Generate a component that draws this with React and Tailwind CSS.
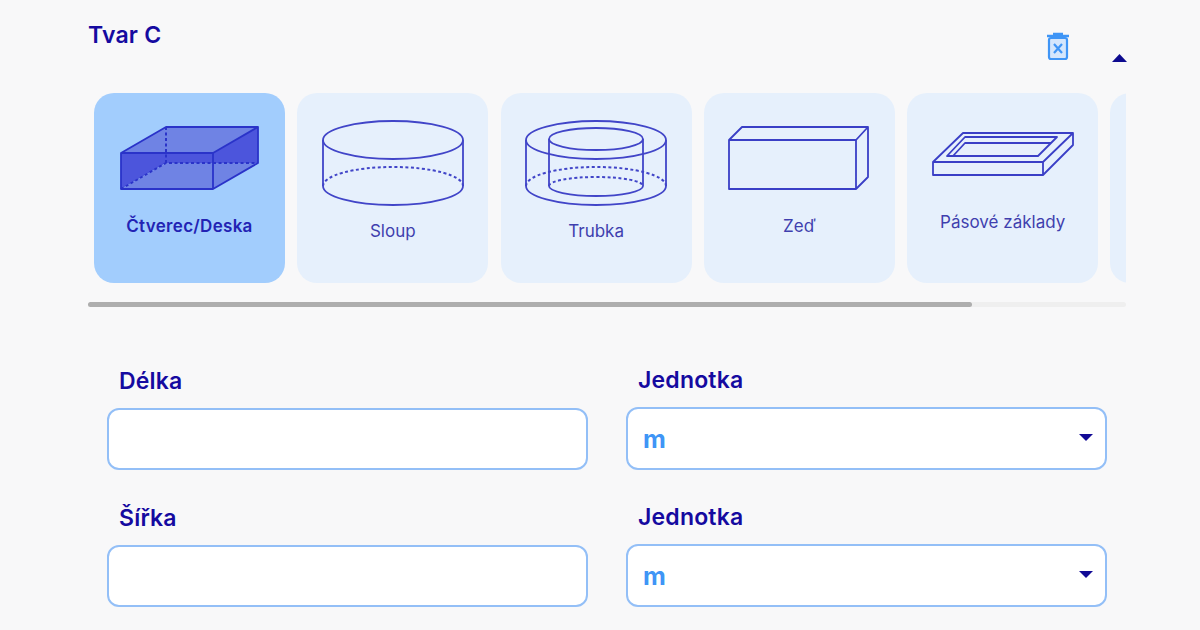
function BoxIcon() {
  return (
    <svg width="141" height="66" viewBox="119 125 141 66" fill="none" stroke="#2a33c9" strokeWidth="1.8" strokeLinejoin="round">
      <polygon points="121,153 166,127 258,127 213,153" fill="#6f83e4" stroke="none" />
      <polygon points="121,153 213,153 213,163 166,163 121,189" fill="#4c55dc" stroke="none" />
      <polygon points="121,189 166,163 213,163 213,189" fill="#6f83e4" stroke="none" />
      <polygon points="213,153 258,127 258,163 213,163" fill="#4c55dc" stroke="none" />
      <polygon points="213,163 258,163 213,189" fill="#6f83e4" stroke="none" />
      <path d="M121 153L166 127H258V163L213 189H121ZM121 153H213V189M213 153L258 127" />
      <path d="M166 127V163M121 189L166 163H258" strokeDasharray="3 2.5" strokeWidth="2" />
    </svg>
  );
}

function CylinderIcon() {
  return (
    <svg width="142" height="87" viewBox="322 120 142 87" fill="none" stroke="#4145c8" strokeWidth="1.8">
      <ellipse cx="393" cy="140" rx="70" ry="19" />
      <path d="M323 140V186C323 196.500 354 205 393 205C432 205 463 196.500 463 186V140" />
      <path d="M323 186C323 175.500 354 167 393 167C432 167 463 175.500 463 186" strokeDasharray="3 2.500" strokeWidth="2" />
    </svg>
  );
}

function TubeIcon() {
  return (
    <svg width="142" height="87" viewBox="525 120 142 87" fill="none" stroke="#4145c8" strokeWidth="1.8">
      <ellipse cx="596" cy="140" rx="70" ry="19" />
      <ellipse cx="596" cy="139" rx="47" ry="11" />
      <path d="M526 140V186C526 196.500 557 205 596 205C635 205 666 196.500 666 186V140" />
      <path d="M549 139V186C549 191.500 570 196 596 196C622 196 643 191.500 643 186V139" />
      <path d="M526 186C526 175.500 557 167 596 167C635 167 666 175.500 666 186" strokeDasharray="3 2.500" strokeWidth="2" />
      <path d="M549 186C549 181 570 177 596 177C622 177 643 181 643 186" strokeDasharray="3 2.500" strokeWidth="2" />
    </svg>
  );
}

function WallIcon() {
  return (
    <svg width="142" height="65" viewBox="729 126 142 65" fill="none" stroke="#3a3fc6" strokeWidth="1.8" strokeLinejoin="round">
      <path d="M730 140H857V189H730ZM730 140L743 127H869V177L857 189M857 140L869 127" />
    </svg>
  );
}

function StripIcon() {
  return (
    <svg width="142" height="44" viewBox="932 132 142 44" fill="none" stroke="#3a3fc6" strokeWidth="1.8" strokeLinejoin="round">
      <path d="M933 162L963 133H1073V145L1043 175H933ZM933 162H1043V175M1043 162L1073 133" />
      <path d="M947 156L965 137H1057L1038 156ZM953 156L965 143H1051" />
    </svg>
  );
}

function ShapeCard({ label, active, className, labelClass, children }) {
  return (
    <div
      className={`flex h-[190px] w-[191px] shrink-0 flex-col items-center rounded-[20px] ${
        active ? "bg-[#a2cdfd]" : "bg-[#e6f0fc]"
      } ${className}`}
    >
      {children}
      <span
        className={`whitespace-nowrap font-['Inter',sans-serif] text-[17px] leading-5 ${
          active ? "font-semibold tracking-[0.3px] text-[#2323b4]" : "text-[#3f3fae]"
        } ${labelClass}`}
      >
        {label}
      </span>
    </div>
  );
}

function Field({ label, children }) {
  return (
    <div className="flex flex-col">
      <label className="mb-[13px] pl-3 font-['Inter',sans-serif] text-[23px] font-semibold leading-7 tracking-[0.2px] text-[#150aa0]">
        {label}
      </label>
      {children}
    </div>
  );
}

function TextInput() {
  return (
    <input
      type="text"
      className="h-[62px] w-full rounded-xl border-2 border-[#93bff7] bg-white px-3 outline-none"
    />
  );
}

function UnitSelect() {
  return (
    <div className="flex h-[63px] w-full items-center justify-between rounded-xl border-2 border-[#93bff7] bg-white pl-[15px] pr-[12px]">
      <span className="mt-[2px] font-['Inter',sans-serif] text-[25px] font-bold text-[#3f95f6]">m</span>
      <svg width="14" height="7" viewBox="0 0 14 7" className="-mt-[2px]">
        <path d="M0 0H14L7 7Z" fill="#120a96" />
      </svg>
    </div>
  );
}

export default function App() {
  return (
    <div className="h-[630px] w-[1200px] overflow-hidden bg-[#f8f8f9] pl-[88px]">
      <div className="flex h-[93px] w-[1039px] items-start justify-between">
        <h2 className="mt-[21px] font-['Inter',sans-serif] text-[23px] font-semibold leading-7 tracking-[0.2px] text-[#150aa0]">Tvar C</h2>
        <div className="flex items-start">
          <svg width="24" height="30" viewBox="0 0 24 30" fill="none" className="mt-[31px]" stroke="#3f95f6">
            <path d="M1 5H23" strokeWidth="2.500" />
            <path d="M7 3H17" strokeWidth="2.500" />
            <rect x="3" y="7" width="18" height="21" rx="2" strokeWidth="2.200" fill="#d4e6fc" />
            <path d="M8 13L16 22M16 13L8 22" strokeWidth="2.200" />
          </svg>
          <svg width="15" height="8" viewBox="0 0 15 8" className="ml-[42px] mt-[54px]">
            <path d="M0 8H15L7.500 0Z" fill="#0d0a8f" />
          </svg>
        </div>
      </div>

      <div className="w-[1038px] overflow-hidden pl-[6px]">
        <div className="flex gap-[12.300px]">
          <ShapeCard label="Čtverec/Deska" active className="pt-[32px]" labelClass="mt-[25px]">
            <BoxIcon />
          </ShapeCard>
          <ShapeCard label="Sloup" className="pt-[27px]" labelClass="mt-[14px]">
            <CylinderIcon />
          </ShapeCard>
          <ShapeCard label="Trubka" className="pt-[27px]" labelClass="mt-[14px]">
            <TubeIcon />
          </ShapeCard>
          <ShapeCard label="Zeď" className="pt-[33px]" labelClass="mt-[25px]">
            <WallIcon />
          </ShapeCard>
          <ShapeCard label="Pásové základy" className="pt-[39px]" labelClass="mt-[36px]">
            <StripIcon />
          </ShapeCard>
          <div className="h-[190px] w-[191px] shrink-0 rounded-[20px] bg-[#e6f0fc]" />
        </div>
      </div>

      <div className="mt-[19px] h-[5px] w-[1038px] rounded-full bg-[#efefef]">
        <div className="h-full w-[884px] rounded-full bg-[#aeaeae]" />
      </div>

      <div className="ml-[19px] mt-[59px] grid w-[1000px] grid-cols-2 items-end gap-x-[38px] gap-y-[33px]">
        <Field label="Délka"><TextInput /></Field>
        <Field label="Jednotka"><UnitSelect /></Field>
        <Field label="Šířka"><TextInput /></Field>
        <Field label="Jednotka"><UnitSelect /></Field>
      </div>
    </div>
  );
}
